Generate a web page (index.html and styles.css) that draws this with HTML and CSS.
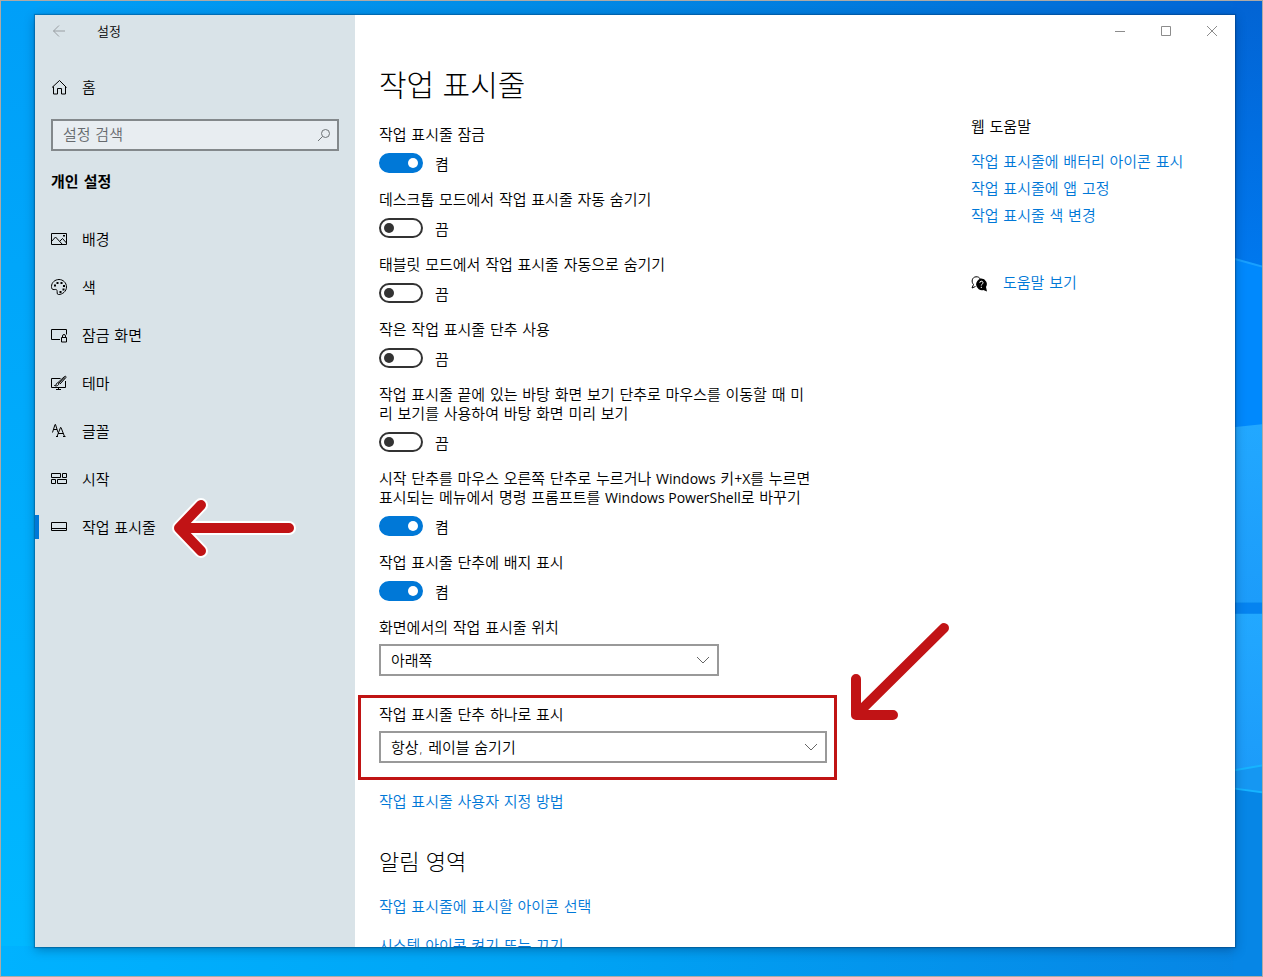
FILE: index.html
```html
<!DOCTYPE html>
<html lang="ko">
<head>
<meta charset="utf-8">
<meta name="viewport" content="width=device-width, initial-scale=1">
<title>설정</title>
<link rel="stylesheet" href="styles.css">
</head>
<body>
<div class="desktop">
  <svg class="wallpaper" viewBox="0 0 1263 977" preserveAspectRatio="none" aria-hidden="true">
    <defs>
      <linearGradient id="base" x1="0" y1="0" x2="1" y2="0">
        <stop offset="0" stop-color="#00b2ff"/><stop offset="0.45" stop-color="#00a3f4"/><stop offset="1" stop-color="#0784e4"/>
      </linearGradient>
      <linearGradient id="top" x1="0" y1="0" x2="1" y2="0">
        <stop offset="0" stop-color="#02a0f8"/><stop offset="0.4" stop-color="#018ce6"/><stop offset="0.8" stop-color="#0273da"/><stop offset="1" stop-color="#0264d4"/>
      </linearGradient>
      <linearGradient id="left" x1="0" y1="0" x2="0" y2="1">
        <stop offset="0" stop-color="#009ff8"/><stop offset="1" stop-color="#00b8ff"/>
      </linearGradient>
      <linearGradient id="upper" x1="0" y1="0" x2="0" y2="1">
        <stop offset="0" stop-color="#0264d4"/><stop offset="1" stop-color="#0078ee"/>
      </linearGradient>
      <linearGradient id="pane" x1="0" y1="0" x2="0" y2="1">
        <stop offset="0" stop-color="#22a8ff"/><stop offset="1" stop-color="#1c9cfa"/>
      </linearGradient>
    </defs>
    <rect width="1263" height="977" fill="url(#base)"/>
    <rect width="1263" height="16" fill="url(#top)"/>
    <rect width="36" height="947" fill="url(#left)"/>
    <path d="M1234 0h29v266l-29-8z" fill="url(#upper)"/>
    <path d="M1234 258l29 8v160l-29 3z" fill="#0089fd"/>
    <path d="M1234 258l29 8" stroke="#18a0ff" stroke-width="2"/>
    <path d="M1234 427l29-3v179h-29z" fill="url(#pane)"/>
    <path d="M1234 603h29v11h-29z" fill="#0583f0"/>
    <path d="M1234 614h29v152l-29 5z" fill="url(#pane)"/>
    <path d="M1234 771l29-5v27l-29-4z" fill="#1597f2"/>
    <path d="M1234 789l29 4v184h-29z" fill="#0686e6"/>
    <path d="M1234 771l29-5M1234 789l29 4" stroke="#16b4ff" stroke-width="2"/>
  </svg>

  <div class="window">
    <aside class="sidebar">
      <header class="titlebar">
        <button class="back" type="button" aria-label="뒤로">
          <svg width="14" height="14" viewBox="0 0 14 14"><path d="M13 7H1.500M7 1.500L1.500 7 7 12.500"/></svg>
        </button>
        <span class="app-name">설정</span>
      </header>
      <a class="nav-link home" href="#home">
        <svg class="icon" viewBox="0 0 16 16"><path d="M1 8.500L8.500 1.500l7 7M2.500 7.500v7.500h4v-5.500h4V15h4V7.500"/></svg>
        <span>홈</span>
      </a>
      <div class="search">
        <input type="search" placeholder="설정 검색" aria-label="설정 검색">
        <svg width="14" height="14" viewBox="0 0 14 14" aria-hidden="true"><circle cx="8.500" cy="5.500" r="4"/><path d="M5.500 8.500L1 13"/></svg>
      </div>
      <h2 class="category">개인 설정</h2>
      <nav class="nav">
        <a class="nav-link" href="#background">
          <svg class="icon" viewBox="0 0 16 16"><path d="M.5 2.500h15v11H.5zM.5 10.500l4-4.500 7 7.500M9 10l2.500-2.500 4 4.500"/><path class="solid" d="M12 4h2v1.500h-2z"/></svg>
          <span>배경</span>
        </a>
        <a class="nav-link" href="#colors">
          <svg class="icon" viewBox="0 0 16 16"><path d="M7.500 15.500c-2 0-1-2.500-1.500-4C5.500 9.500 3.500 11 2 10.500.5 10 .5 8.500.5 7.500c0-4 3.500-7 7.500-7s7.500 3.200 7.500 7.500-4 7.500-8 7.500z"/><path class="solid" d="M3 5.500h2v2H3zM5.500 3h2v2h-2zM9.500 3h2v2h-2zM12 6h2v2h-2zM11.500 9.500h2v2h-2zM8.500 12h2v2h-2z"/></svg>
          <span>색</span>
        </a>
        <a class="nav-link" href="#lockscreen">
          <svg class="icon" viewBox="0 0 16 16"><path d="M9 12.500H.5v-10h15v5M10.500 10.500h5v4.500h-5zM11.500 10.500V9a1.500 1.500 0 0 1 3 0v1.500"/></svg>
          <span>잠금 화면</span>
        </a>
        <a class="nav-link" href="#themes">
          <svg class="icon" viewBox="0 0 16 16"><path d="M9.500 3.500h-9v9h14V6M7.500 12.500v2M5 14.500h5M3.500 10.500c2 0 1.500-1.500 2.500-2.500s2.500.5 1.500 1.700-2.500 1.600-4 .8zM7 7.500l6.500-6c1-.8 2 .2 1.300 1.200L9 9M7.500 8.500l6.500-6"/></svg>
          <span>테마</span>
        </a>
        <a class="nav-link" href="#fonts">
          <svg class="icon" viewBox="0 0 16 16"><path d="M1.500 9.500l2.500-8h.5l2.500 8M2.500 6.500h3.500M6 13.500l3.500-9h.5l3.500 9M7 10.500h5.500M5 13.500h2M12 13.500h2.500"/></svg>
          <span>글꼴</span>
        </a>
        <a class="nav-link" href="#start">
          <svg class="icon" viewBox="0 0 16 16"><path d="M.5 2.500h9v4h-9zM11.500 2.500h4v4h-4zM.5 8.500h4v4h-4zM6.500 8.500h9v4h-9z"/></svg>
          <span>시작</span>
        </a>
        <a class="nav-link current" href="#taskbar" aria-current="page">
          <svg class="icon" viewBox="0 0 16 16"><path d="M.5 3.500h15v8H.5zM.5 9.500h15"/></svg>
          <span>작업 표시줄</span>
          <svg class="pointer-left" width="126" height="62" viewBox="0 0 126 62" aria-hidden="true"><path class="halo" d="M118 31H8M30 8L8 31l22 23"/><path class="ink" d="M118 31H8M30 8L8 31l22 23"/></svg>
        </a>
      </nav>
    </aside>

    <main class="main">
      <div class="controls">
        <button type="button" aria-label="최소화"><svg width="12" height="12" viewBox="0 0 12 12"><path d="M1 6.500h10"/></svg></button>
        <button type="button" aria-label="최대화"><svg width="12" height="12" viewBox="0 0 12 12"><path d="M1.500 1.500h9v9h-9z"/></svg></button>
        <button type="button" aria-label="닫기"><svg width="12" height="12" viewBox="0 0 12 12"><path d="M1 1l10 10M11 1L1 11"/></svg></button>
      </div>
      <div class="content">
        <section class="settings">
          <h1>작업 표시줄</h1>
          <div class="setting">
            <label for="lock">작업 표시줄 잠금</label>
            <div class="toggle"><input id="lock" type="checkbox" role="switch" checked><span>켬</span></div>
          </div>
          <div class="setting">
            <label for="hide-desktop">데스크톱 모드에서 작업 표시줄 자동 숨기기</label>
            <div class="toggle"><input id="hide-desktop" type="checkbox" role="switch"><span>끔</span></div>
          </div>
          <div class="setting">
            <label for="hide-tablet">태블릿 모드에서 작업 표시줄 자동으로 숨기기</label>
            <div class="toggle"><input id="hide-tablet" type="checkbox" role="switch"><span>끔</span></div>
          </div>
          <div class="setting">
            <label for="small">작은 작업 표시줄 단추 사용</label>
            <div class="toggle"><input id="small" type="checkbox" role="switch"><span>끔</span></div>
          </div>
          <div class="setting">
            <label for="peek">작업 표시줄 끝에 있는 바탕 화면 보기 단추로 마우스를 이동할 때 미<br>리 보기를 사용하여 바탕 화면 미리 보기</label>
            <div class="toggle"><input id="peek" type="checkbox" role="switch"><span>끔</span></div>
          </div>
          <div class="setting">
            <label for="powershell">시작 단추를 마우스 오른쪽 단추로 누르거나 <span class="latin">Windows</span> 키<span class="latin">+X</span>를 누르면<br>표시되는 메뉴에서 명령 프롬프트를 <span class="latin">Windows PowerShell</span>로 바꾸기</label>
            <div class="toggle"><input id="powershell" type="checkbox" role="switch" checked><span>켬</span></div>
          </div>
          <div class="setting">
            <label for="badges">작업 표시줄 단추에 배지 표시</label>
            <div class="toggle"><input id="badges" type="checkbox" role="switch" checked><span>켬</span></div>
          </div>
          <div class="setting choice">
            <label for="position">화면에서의 작업 표시줄 위치</label>
            <div class="dropdown narrow">
              <select id="position"><option>아래쪽</option></select>
              <svg width="14" height="8" viewBox="0 0 14 8" aria-hidden="true"><path d="M1 1l6 6 6-6"/></svg>
            </div>
          </div>
          <div class="setting choice highlighted">
            <label for="combine">작업 표시줄 단추 하나로 표시</label>
            <div class="dropdown">
              <select id="combine"><option>항상, 레이블 숨기기</option></select>
              <svg width="14" height="8" viewBox="0 0 14 8" aria-hidden="true"><path d="M1 1l6 6 6-6"/></svg>
            </div>
            <svg class="pointer-down" width="104" height="104" viewBox="0 0 104 104" aria-hidden="true"><path class="ink" d="M96 8L8 95M8 59v36h37"/></svg>
          </div>
          <a class="link" href="#customize">작업 표시줄 사용자 지정 방법</a>
          <h2>알림 영역</h2>
          <a class="link" href="#icons">작업 표시줄에 표시할 아이콘 선택</a>
          <a class="link second" href="#system-icons">시스템 아이콘 켜기 또는 끄기</a>
        </section>

        <aside class="help">
          <h3>웹 도움말</h3>
          <a class="link" href="#battery">작업 표시줄에 배터리 아이콘 표시</a>
          <a class="link" href="#pin">작업 표시줄에 앱 고정</a>
          <a class="link" href="#taskbar-color">작업 표시줄 색 변경</a>
          <div class="get-help">
            <svg width="16" height="16" viewBox="0 0 16 16" aria-hidden="true">
              <path class="bubble" d="M2.500 8.500C0 6 1 1 5 .8 7 .6 8.500 1.500 9.300 3M2.500 8.500L1 12l3.500-1.500"/>
              <path class="bubble-solid" d="M10.300 2.600a5.500 5.500 0 0 1 4.700 8.400l1 4.500-3.700-1.500A5.800 5.800 0 1 1 10.300 2.600z"/>
              <path class="mark" d="M8.800 6.800a1.600 1.600 0 1 1 2.300 1.400c-.6.400-.8.600-.8 1.300M10.300 10.800v1.200"/>
            </svg>
            <a class="link" href="#get-help">도움말 보기</a>
          </div>
        </aside>
      </div>
    </main>
  </div>
</div>
</body>
</html>
```
FILE: styles.css
```css
* {
  box-sizing: border-box;
}

body {
  margin: 0;
  color: #000;
  font: 350 15px/19px "DejaVu Sans", "Noto Sans CJK KR", sans-serif;
}

h1, h2, h3 {
  margin: 0;
  font-weight: inherit;
}

button, input, select {
  margin: 0;
  font: inherit;
  color: inherit;
}

svg {
  display: block;
  flex: none;
  fill: none;
  stroke: currentColor;
}

.latin {
  font-family: "Open Sans", "Noto Sans", sans-serif;
  font-size: 14px;
  font-weight: 400;
  line-height: 1;
}

.desktop {
  position: relative;
  display: flex;
  height: 100vh;
  padding: 14px 27px 29px 34px;
  border: 1px solid #aeaaa6;
  overflow: hidden;
}

.wallpaper {
  position: absolute;
  inset: 0;
  width: 100%;
  height: 100%;
  stroke: none;
}

.window {
  position: relative;
  display: flex;
  flex: 1;
  min-width: 0;
  background: #fff;
  box-shadow: 0 0 1px 1px rgba(0, 40, 80, 0.3), 0 3px 10px rgba(0, 30, 70, 0.35);
}

.sidebar {
  flex: none;
  width: 320px;
  background: #d9e3e8;
}

.titlebar {
  display: flex;
  align-items: center;
  height: 32px;
  font-size: 13px;
}

.back {
  display: grid;
  place-items: center;
  width: 48px;
  height: 32px;
  padding: 0;
  border: 0;
  background: none;
  color: #999ea2;
}

.app-name {
  padding-left: 14px;
}

.nav-link {
  position: relative;
  display: flex;
  align-items: center;
  gap: 15px;
  height: 48px;
  padding: 0 16px;
  color: #000;
  text-decoration: none;
}

.nav-link span {
  padding-top: 2px;
}

.home {
  height: 40px;
  margin-top: 20px;
}

.icon {
  width: 16px;
  height: 16px;
}

.solid {
  fill: currentColor;
  stroke: none;
}

.current::before {
  content: "";
  position: absolute;
  left: 0;
  top: 12px;
  width: 4px;
  height: 24px;
  background: #0078d7;
}

.search {
  display: flex;
  align-items: center;
  height: 32px;
  margin: 12px 16px 21px;
  padding: 0 6px 0 10px;
  border: 2px solid #83888b;
  background: #e8edf1;
  color: #6e7376;
}

.search input {
  flex: 1;
  min-width: 0;
  padding: 0;
  border: 0;
  outline: 0;
  background: none;
}

.search input::placeholder {
  color: #666a6e;
  opacity: 1;
}

.category {
  margin: 0 16px 23px;
  font-size: 15px;
  line-height: 20px;
  font-weight: 700;
}

.main {
  display: flex;
  flex: 1;
  flex-direction: column;
  min-width: 0;
  overflow: hidden;
}

.controls {
  display: flex;
  flex: none;
  justify-content: flex-end;
  height: 32px;
}

.controls button {
  display: grid;
  place-items: center;
  width: 46px;
  padding: 0;
  border: 0;
  background: none;
  color: #8c8c8c;
}

.content {
  display: grid;
  flex: 1;
  grid-template-columns: minmax(0, 448px) minmax(0, 240px);
  gap: 144px;
  min-height: 0;
  padding: 16px 24px 0;
}

.settings h1 {
  margin-bottom: 23px;
  font-family: "Noto Sans CJK KR", sans-serif;
  font-size: 30px;
  line-height: 40px;
  font-weight: 300;
}

.setting {
  display: flex;
  flex-direction: column;
  gap: 8px;
  margin-bottom: 18px;
}

.setting label {
  white-space: nowrap;
}

.toggle {
  display: flex;
  align-items: center;
  gap: 12px;
  height: 20px;
}

.toggle span {
  padding-top: 5px;
}

.toggle input {
  appearance: none;
  display: flex;
  align-items: center;
  width: 44px;
  height: 20px;
  padding: 0 3px;
  border: 2px solid #333;
  border-radius: 10px;
  background: #fff;
}

.toggle input::before {
  content: "";
  width: 10px;
  height: 10px;
  border-radius: 50%;
  background: #333;
}

.toggle input:checked {
  justify-content: flex-end;
  border-color: #0078d7;
  background: #0078d7;
}

.toggle input:checked::before {
  background: #fff;
}

.choice {
  position: relative;
  gap: 6px;
  margin-bottom: 30px;
}

.dropdown {
  display: grid;
  align-items: center;
}

.dropdown select,
.dropdown svg {
  grid-area: 1 / 1;
}

.dropdown select {
  appearance: none;
  width: 100%;
  height: 32px;
  padding: 2px 32px 0 10px;
  border: 2px solid #999;
  border-radius: 0;
  background: #fff;
}

.dropdown svg {
  justify-self: end;
  margin-right: 9px;
  color: #666;
  pointer-events: none;
}

.narrow {
  width: 340px;
}

.highlighted::after {
  content: "";
  position: absolute;
  inset: -11px -10px -17px -21px;
  border: 3px solid #c01414;
  pointer-events: none;
}

.ink,
.halo {
  stroke: #c11315;
  stroke-width: 10px;
  stroke-linecap: round;
  stroke-linejoin: round;
}

.halo {
  stroke: #fff;
  stroke-width: 14px;
}

.pointer-left {
  position: absolute;
  left: 136px;
  top: -6px;
}

.pointer-down {
  position: absolute;
  left: 469px;
  top: -86px;
}

.link {
  display: block;
  color: #0078d7;
  text-decoration: none;
}

.settings h2 {
  margin: 34px 0 24px;
  font-family: "Noto Sans CJK KR", sans-serif;
  font-size: 22px;
  line-height: 28px;
  font-weight: 300;
}

.second {
  margin-top: 20px;
}

.help {
  display: flex;
  flex-direction: column;
  gap: 8px;
  padding-top: 55px;
  white-space: nowrap;
}

.help h3 {
  margin-bottom: 8px;
  font-size: 15px;
}

.get-help {
  display: flex;
  align-items: center;
  gap: 16px;
  margin-top: 40px;
}

.bubble-solid {
  fill: #000;
  stroke: none;
}

.mark {
  stroke: #fff;
}
```
